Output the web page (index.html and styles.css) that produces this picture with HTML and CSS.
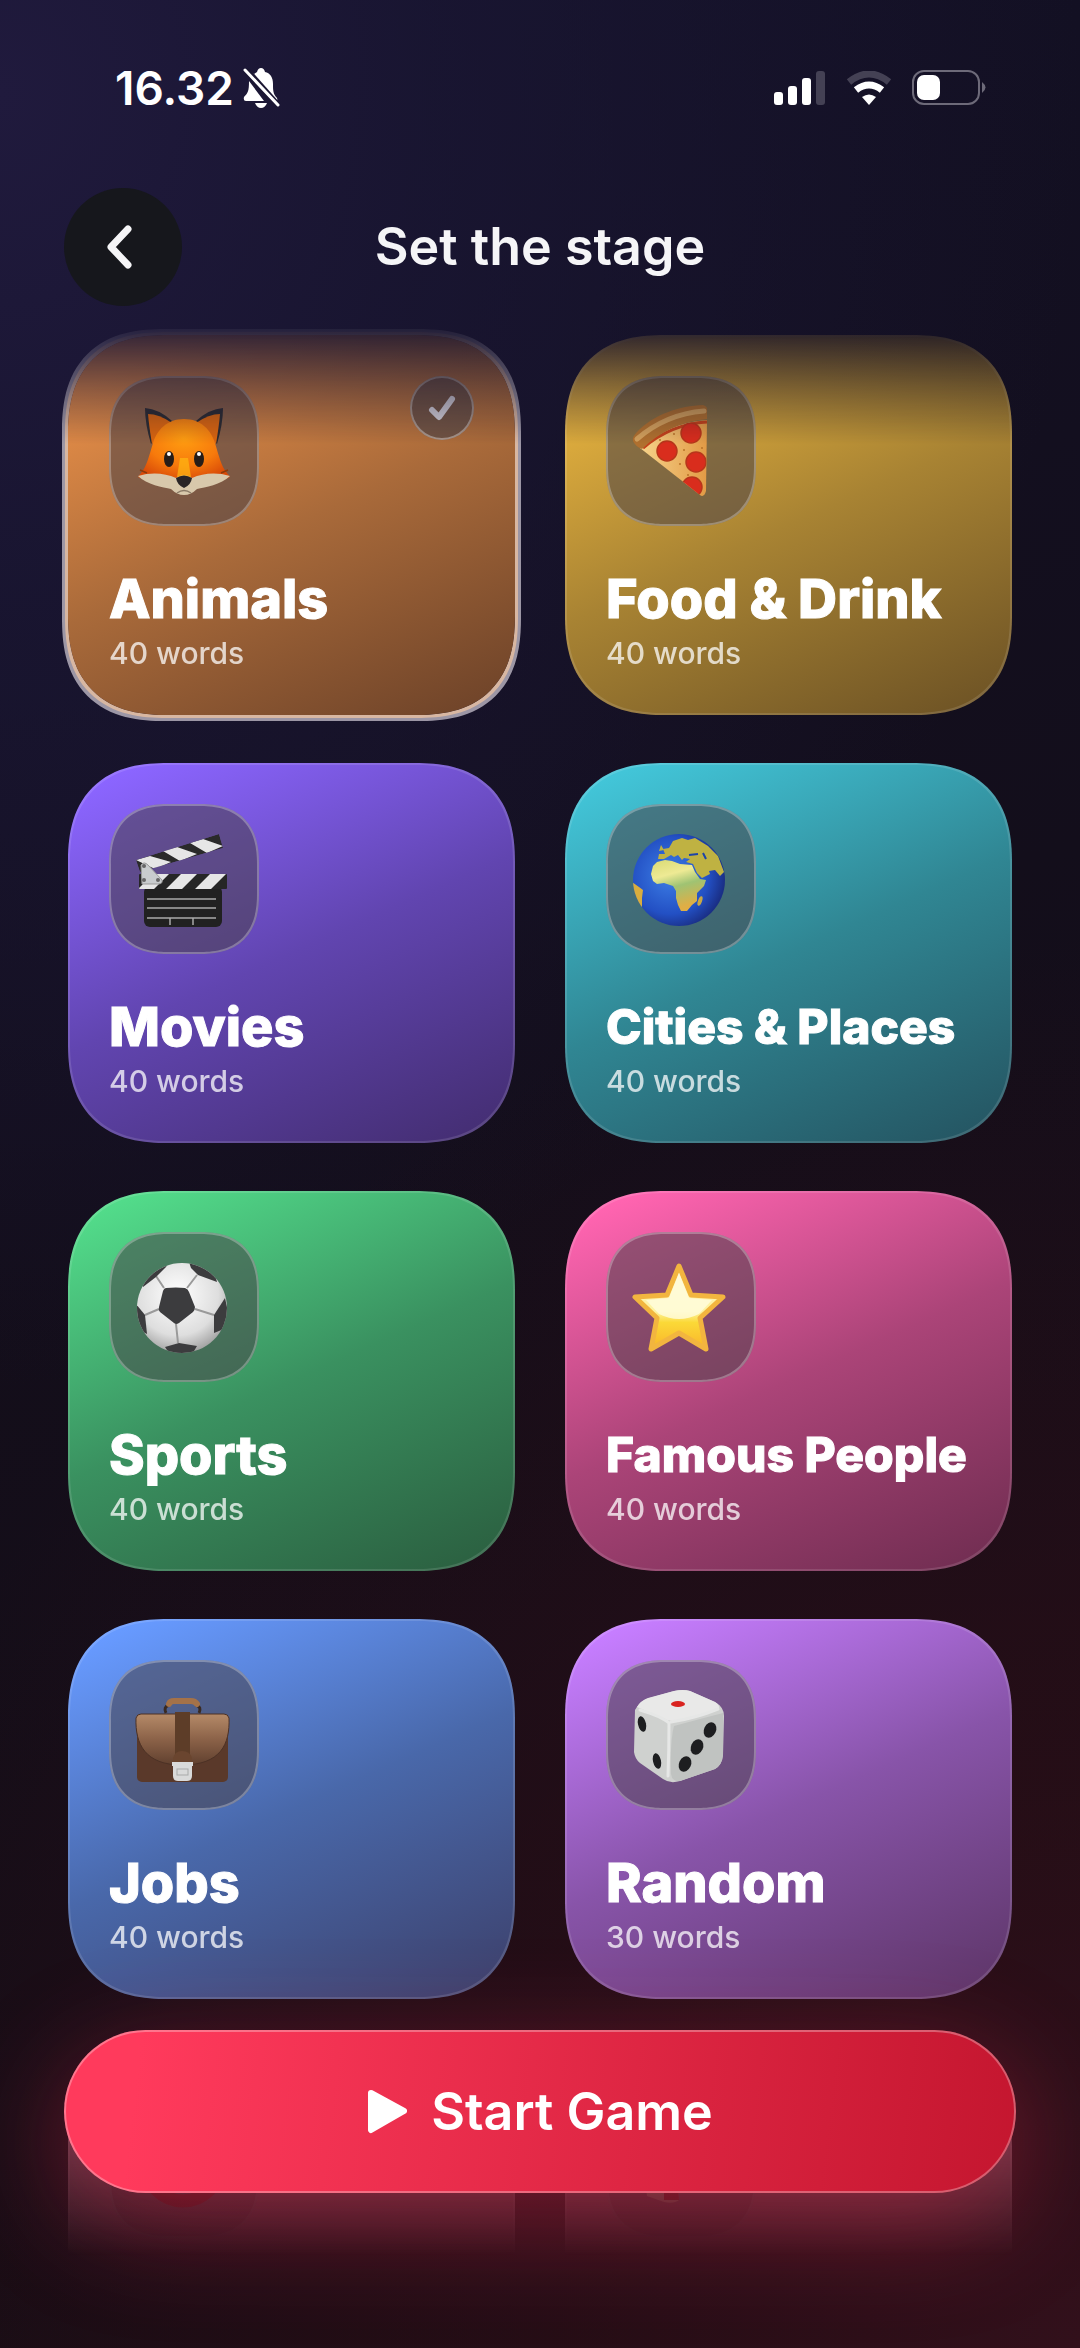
FILE: index.html
```html
<!DOCTYPE html>
<html lang="en">
<head>
    <meta charset="UTF-8">
    <meta name="viewport" content="width=device-width, initial-scale=1.0">
    <title>Set the stage</title>
    <link rel="stylesheet" href="styles.css">
</head>
<body>
    <div class="screen">
        <div class="status-bar">
            <div class="status-left">
                <span class="time">16.32</span>
                <svg class="bell" width="38" height="40" viewBox="0 0 38 40">
                    <path fill="#fff" d="M9 4 L30 34 H34 Q36 33 35 30 C31 26 31 22 31 16 C31 9 28 5 23 4 Q22 0 19 0 Q16 0 15 4 L12 6 Z"/>
                    <path fill="#fff" d="M7 13 C7 23 6 25 2 29 Q1 33 4 33 H22 Z"/>
                    <path fill="#fff" d="M13 35 H25 Q23 40 19 40 Q15 40 13 35 Z"/>
                    <path stroke="#1b1733" stroke-width="7" d="M4 2 L36 38"/>
                    <path stroke="#fff" stroke-width="3" stroke-linecap="round" d="M3 2 L36 37"/>
                </svg>
            </div>
            <div class="status-right">
                <svg width="52" height="34" viewBox="0 0 52 34">
                    <rect x="0" y="21" width="9" height="13" rx="3" fill="#fff"/>
                    <rect x="14" y="15" width="9" height="19" rx="3" fill="#fff"/>
                    <rect x="28" y="7" width="9" height="27" rx="3" fill="#fff"/>
                    <rect x="42" y="0" width="9" height="34" rx="3" fill="#444154"/>
                </svg>
                <svg width="46" height="34" viewBox="0 0 46 34">
                    <path fill="none" stroke="#444154" stroke-width="7" d="M3 11 Q23 -5 43 11"/>
                    <path fill="none" stroke="#fff" stroke-width="7" d="M10 19 Q23 9 36 19"/>
                    <path fill="#fff" d="M16 26 Q23 21 30 26 L23 34 Z"/>
                </svg>
                <svg width="74" height="36" viewBox="0 0 74 36">
                    <rect x="1" y="1" width="66" height="33" rx="11" fill="none" stroke="#6d6a79" stroke-width="2"/>
                    <rect x="5" y="5" width="23" height="25" rx="7" fill="#fff"/>
                    <path fill="#6d6a79" d="M70 12 Q77 17.500 70 23 Z"/>
                </svg>
            </div>
        </div>

        <header class="header">
            <button class="back-btn" type="button" aria-label="Back">
                <svg width="30" height="46" viewBox="0 0 30 46">
                    <path fill="none" stroke="#f5f5f7" stroke-width="7" stroke-linecap="round" stroke-linejoin="round" d="M23 5 L6 23 L23 41"/>
                </svg>
            </button>
            <h1>Set the stage</h1>
        </header>

        <main class="list">
            <button class="card orange selected" type="button" aria-pressed="true">
                <span class="card-top">
                    <span class="tile">
                        <svg viewBox="0 0 150 150">
                            <defs>
                                <radialGradient id="fur" cx="50%" cy="30%" r="65%">
                                    <stop offset="0" stop-color="#ff9d10"/>
                                    <stop offset="0.6" stop-color="#f77a0c"/>
                                    <stop offset="1" stop-color="#d84a08"/>
                                </radialGradient>
                            </defs>
                            <path fill="#2b2b30" d="M36 32 Q50 33 63 45 L42 68 Q36 48 36 32 Z"/>
                            <path fill="#2b2b30" d="M114 32 Q100 33 87 45 L108 68 Q114 48 114 32 Z"/>
                            <path fill="#d9650f" d="M39 38 Q50 38 63 47 L43 68 Q40 50 39 38 Z"/>
                            <path fill="#d9650f" d="M111 38 Q100 38 87 47 L107 68 Q110 50 111 38 Z"/>
                            <path fill="url(#fur)" d="M75 43 C92 43 102 54 106 67 C110 80 112 90 118 97 L121 101 C112 106 98 110 75 110 C52 110 38 106 29 101 L32 97 C38 90 40 80 44 67 C48 54 58 43 75 43 Z"/>
                            <path fill="#d8c8ab" d="M29 100 C42 96 56 97 67 102 Q75 96 83 102 C94 97 108 96 121 100 C112 109 96 111 88 113 Q82 119 75 119 Q68 119 62 113 C54 111 38 109 29 100 Z"/>
                            <path fill="#ffb813" d="M71 82 H79 L82 101 H68 Z" opacity="0.7"/>
                            <path fill="#2a2526" d="M67 102 Q75 97 83 102 Q82 109 75 112 Q68 109 67 102 Z"/>
                            <path fill="none" stroke="#8a7a66" stroke-width="1.500" d="M68 117 Q75 112 82 117"/>
                            <path stroke="#8c3a0a" stroke-width="1.500" d="M31 94 L38 97 M119 94 L112 97"/>
                            <ellipse cx="60" cy="83" rx="5" ry="8" fill="#271d18"/>
                            <ellipse cx="90" cy="83" rx="5" ry="8" fill="#271d18"/>
                            <ellipse cx="60" cy="78" rx="2" ry="2" fill="#fff"/>
                            <ellipse cx="90" cy="78" rx="2" ry="2" fill="#fff"/>
                        </svg>
                    </span>
                    <span class="check">
                        <svg width="28" height="26" viewBox="0 0 28 26">
                            <path fill="none" stroke="#d8d4dc" stroke-width="6" stroke-linecap="round" stroke-linejoin="round" d="M4 15 L11 22 L24 4"/>
                        </svg>
                    </span>
                </span>
                <span class="card-text">
                    <span class="card-title">Animals</span>
                    <span class="card-count">40 words</span>
                </span>
            </button>

            <button class="card yellow" type="button" aria-pressed="false">
                <span class="card-top">
                    <span class="tile">
                        <svg viewBox="0 0 150 150">
                            <defs>
                                <clipPath id="slice"><path d="M34 72 Q64 46 101 44 L100 115 Q98 122 94 119 Z"/></clipPath>
                                <linearGradient id="cheese" x1="0" x2="1">
                                    <stop offset="0" stop-color="#f6d38a"/>
                                    <stop offset="1" stop-color="#e29a45"/>
                                </linearGradient>
                            </defs>
                            <path fill="url(#cheese)" d="M34 72 Q64 46 101 44 L100 115 Q98 122 94 119 Z"/>
                            <path fill="none" stroke="#c4421b" stroke-width="3" d="M37 72 Q65 48 101 46"/>
                            <path fill="#b0702f" d="M27 65 Q26 61 31 56 C48 38 74 30 97 29 Q101 30 101 33 L101 43 Q64 46 36 73 Q29 70 27 65 Z"/>
                            <path fill="none" stroke="#d3a05c" stroke-width="5" stroke-linecap="round" d="M31 63 Q60 38 98 35"/>
                            <g clip-path="url(#slice)" fill="#d92d1d" stroke="#b8361a" stroke-width="1.500">
                                <circle cx="85" cy="57" r="10"/>
                                <circle cx="61" cy="75" r="10"/>
                                <circle cx="90" cy="86" r="10"/>
                                <circle cx="86" cy="111" r="10"/>
                            </g>
                            <g fill="#b97328">
                                <circle cx="54" cy="64" r="1"/><circle cx="74" cy="88" r="1"/>
                                <circle cx="78" cy="74" r="1"/><circle cx="96" cy="72" r="1"/>
                                <circle cx="82" cy="99" r="1"/><circle cx="68" cy="58" r="1"/>
                            </g>
                        </svg>
                    </span>
                </span>
                <span class="card-text">
                    <span class="card-title">Food &amp; Drink</span>
                    <span class="card-count">40 words</span>
                </span>
            </button>

            <button class="card violet" type="button" aria-pressed="false">
                <span class="card-top">
                    <span class="tile">
                        <svg viewBox="0 0 150 150">
                            <defs>
                                <clipPath id="arm-top"><path d="M27 56 L110 30 L114 44 L31 68 Z"/></clipPath>
                                <clipPath id="arm-low"><rect x="30" y="70" width="88" height="15" rx="1"/></clipPath>
                            </defs>
                            <rect x="35" y="82" width="78" height="41" rx="6" fill="#212121"/>
                            <path stroke="#a9a9a9" stroke-width="1.500" d="M38 95 H107 M38 104 H107 M38 114 H107 M61 114 V121 M84 114 V121"/>
                            <g clip-path="url(#arm-low)">
                                <rect x="30" y="70" width="88" height="15" fill="#262626"/>
                                <path fill="#e6e6e6" d="M44 70 L29 85 H45 L60 70 Z M72 70 L57 85 H73 L88 70 Z M101 70 L86 85 H102 L117 70 Z"/>
                            </g>
                            <g clip-path="url(#arm-top)">
                                <path fill="#2a2a2a" d="M27 56 L110 30 L114 44 L31 68 Z"/>
                                <path fill="#e6e6e6" d="M27 56 L41 52 L62 58 L46 65 Z M54 47 L68 43 L88 50 L71 57 Z M81 39 L94 35 L114 42 L98 49 Z"/>
                            </g>
                            <path fill="#c9ccce" stroke="#999" stroke-width="1" d="M32 61 Q35 57 39 61 L53 76 Q54 80 49 80 H33 Z"/>
                            <circle cx="35" cy="62" r="2" fill="#666"/>
                            <circle cx="35" cy="76" r="2" fill="#666"/>
                            <circle cx="49" cy="76" r="2" fill="#666"/>
                        </svg>
                    </span>
                </span>
                <span class="card-text">
                    <span class="card-title">Movies</span>
                    <span class="card-count">40 words</span>
                </span>
            </button>

            <button class="card teal" type="button" aria-pressed="false">
                <span class="card-top">
                    <span class="tile">
                        <svg viewBox="0 0 150 150">
                            <defs>
                                <radialGradient id="sea" cx="40%" cy="45%" r="60%">
                                    <stop offset="0" stop-color="#3d7fe6"/>
                                    <stop offset="0.7" stop-color="#2350c4"/>
                                    <stop offset="1" stop-color="#1a2f86"/>
                                </radialGradient>
                                <linearGradient id="land" x1="0" y1="0" x2="0.300" y2="1">
                                    <stop offset="0" stop-color="#d9da74"/>
                                    <stop offset="0.350" stop-color="#eeea94"/>
                                    <stop offset="0.600" stop-color="#9fc373"/>
                                    <stop offset="1" stop-color="#e0ae45"/>
                                </linearGradient>
                                <clipPath id="globe"><circle cx="73" cy="76" r="46"/></clipPath>
                            </defs>
                            <circle cx="73" cy="76" r="46" fill="url(#sea)"/>
                            <g clip-path="url(#globe)">
                                <path fill="url(#land)" d="M47 62 L51 58 L59 56 L66 57 L74 60 L86 61 L89 68 L94 75 L100 76 L98 82 L91 89 L91 97 L86 101 L81 107 L75 107 L72 101 L70 94 L70 87 L67 82 L58 79 L51 80 L47 77 L45 70 Z"/>
                                <path fill="#bfb242" d="M52 55 L53 50 L59 50 L57 45 L63 44 L67 37 L76 34 L82 36 L89 34 L102 42 L112 52 L118 68 L114 72 L109 66 L103 67 L104 70 L96 74 L91 69 L87 60 L80 58 L84 55 L78 54 L76 56 L72 51 L68 53 L65 51 L58 55 Z"/>
                                <path fill="#bfb242" d="M53 47 L55 41 L58 46 Z"/>
                                <ellipse cx="94" cy="97" rx="2" ry="5" fill="#c9a844" transform="rotate(20 94 97)"/>
                                <path fill="#d8ad3f" d="M26 78 L33 83 L37 86 L36 94 L36 106 L26 100 Z"/>
                                <path stroke="#1e45a8" stroke-width="2" d="M97 49 L100 55 M83 51 L92 50"/>
                            </g>
                        </svg>
                    </span>
                </span>
                <span class="card-text">
                    <span class="card-title small">Cities &amp; Places</span>
                    <span class="card-count">40 words</span>
                </span>
            </button>

            <button class="card green" type="button" aria-pressed="false">
                <span class="card-top">
                    <span class="tile">
                        <svg viewBox="0 0 150 150">
                            <defs>
                                <radialGradient id="leather" cx="45%" cy="35%" r="65%">
                                    <stop offset="0" stop-color="#ffffff"/>
                                    <stop offset="0.700" stop-color="#dedede"/>
                                    <stop offset="1" stop-color="#a5a5a5"/>
                                </radialGradient>
                                <clipPath id="ball"><circle cx="73" cy="76" r="45"/></clipPath>
                            </defs>
                            <circle cx="73" cy="76" r="45" fill="url(#leather)"/>
                            <g clip-path="url(#ball)">
                                <path fill="none" stroke="#9a9a9a" stroke-width="2" d="M55 56 L47 44 M78 56 L88 43 M86 77 L105 83 M67 92 L69 111 M50 77 L36 83"/>
                                <g fill="#3c3c3e">
                                    <path d="M57 56 Q67 55 76 56 Q79 57 80 60 L86 75 Q86 78 84 80 L70 91 Q67 93 65 91 L51 80 Q49 78 50 75 L54 59 Q55 56 57 56 Z"/>
                                    <path d="M60 30 L57 35 L47 45 L34 55 L30 40 Z"/>
                                    <path d="M80 30 L82 36 L89 43 L108 50 L104 34 Z"/>
                                    <path d="M116 66 L105 83 L105 101 L122 94 Z"/>
                                    <path d="M56 115 L70 111 L88 114 L82 124 H62 Z"/>
                                    <path d="M27 72 L36 83 L38 102 L26 96 Z"/>
                                </g>
                            </g>
                        </svg>
                    </span>
                </span>
                <span class="card-text">
                    <span class="card-title">Sports</span>
                    <span class="card-count">40 words</span>
                </span>
            </button>

            <button class="card pink" type="button" aria-pressed="false">
                <span class="card-top">
                    <span class="tile">
                        <svg viewBox="0 0 150 150">
                            <defs>
                                <linearGradient id="gold" x1="0" y1="0" x2="0" y2="1">
                                    <stop offset="0" stop-color="#fff3c0"/>
                                    <stop offset="0.550" stop-color="#fdf3a0"/>
                                    <stop offset="0.680" stop-color="#fbd937"/>
                                    <stop offset="1" stop-color="#f9b42a"/>
                                </linearGradient>
                            </defs>
                            <path fill="url(#gold)" stroke="#f2b53f" stroke-width="5" stroke-linejoin="round" d="M73 34 L85 63 L117 65 L94 86 L100 117 L73 101 L45 117 L51 86 L29 65 L61 63 Z"/>
                            <path fill="#fffde0" opacity="0.800" d="M73 41 L83 66 L106 68 L93 82 Q73 92 53 82 L40 68 L63 66 Z"/>
                        </svg>
                    </span>
                </span>
                <span class="card-text">
                    <span class="card-title small">Famous People</span>
                    <span class="card-count">40 words</span>
                </span>
            </button>

            <button class="card blue" type="button" aria-pressed="false">
                <span class="card-top">
                    <span class="tile">
                        <svg viewBox="0 0 150 150">
                            <defs>
                                <linearGradient id="flap" x1="0" y1="0" x2="0" y2="1">
                                    <stop offset="0" stop-color="#b58a68"/>
                                    <stop offset="0.500" stop-color="#8b6248"/>
                                    <stop offset="1" stop-color="#60402f"/>
                                </linearGradient>
                            </defs>
                            <path fill="none" stroke="#3a2a22" stroke-width="3" d="M57 53 Q54 47 60 45 M90 53 Q93 47 87 45"/>
                            <path fill="none" stroke="#a47249" stroke-width="6" stroke-linecap="round" d="M60 44 Q61 41 65 41 H82 Q86 41 88 44"/>
                            <rect x="28" y="56" width="91" height="66" rx="5" fill="#5a392a"/>
                            <path fill="url(#flap)" stroke="#4c3125" stroke-width="1" d="M27 58 Q28 54 32 54 H115 Q119 54 120 58 C121 84 112 105 73 105 C36 105 26 84 27 58 Z"/>
                            <rect x="66" y="52" width="15" height="42" fill="#5d3d28"/>
                            <path fill="#6a452f" d="M64 102 V98 Q66 91 73 91 Q81 91 83 98 V102 Z"/>
                            <path fill="#d9dada" d="M63 102 H84 V106 H83 V116 Q83 121 78 121 H69 Q64 121 64 116 V106 H63 Z"/>
                            <rect x="68" y="109" width="11" height="6" fill="none" stroke="#a9aaaa" stroke-width="1"/>
                        </svg>
                    </span>
                </span>
                <span class="card-text">
                    <span class="card-title">Jobs</span>
                    <span class="card-count">40 words</span>
                </span>
            </button>

            <button class="card purple" type="button" aria-pressed="false">
                <span class="card-top">
                    <span class="tile">
                        <svg viewBox="0 0 150 150">
                            <path fill="#cfd1cf" d="M29 50 Q33 43 40 39 L68 31 Q77 29 84 31 L109 42 Q118 47 118 56 L117 95 Q116 105 109 109 L74 121 Q64 124 57 119 L34 103 Q29 99 28 92 Z"/>
                            <path fill="#e9e9e8" d="M31 47 Q34 41 42 38 L68 31 Q77 29 84 31 L109 42 Q114 45 113 49 Q100 54 70 61 Q63 62 57 58 Z"/>
                            <path fill="#c0c3c1" d="M68 66 Q90 60 117 53 L117 95 Q116 105 109 109 L74 121 Q66 122 65 114 Q64 80 68 66 Z"/>
                            <path fill="none" stroke="#e6e7e6" stroke-width="3" stroke-linecap="round" d="M34 50 Q57 57 63 63 Q63 90 62 116 M65 62 Q90 58 112 49"/>
                            <ellipse cx="72" cy="44" rx="7" ry="3" fill="#d9231f"/>
                            <g fill="#1d1e20">
                                <ellipse cx="36" cy="64" rx="4" ry="8" transform="rotate(-12 36 64)"/>
                                <ellipse cx="51" cy="101" rx="4" ry="8" transform="rotate(-12 51 101)"/>
                                <ellipse cx="104" cy="70" rx="6" ry="8" transform="rotate(25 104 70)"/>
                                <ellipse cx="91" cy="87" rx="6" ry="8" transform="rotate(25 91 87)"/>
                                <ellipse cx="79" cy="104" rx="6" ry="8" transform="rotate(25 79 104)"/>
                            </g>
                        </svg>
                    </span>
                </span>
                <span class="card-text">
                    <span class="card-title">Random</span>
                    <span class="card-count">30 words</span>
                </span>
            </button>

            <!-- next row, faded out under the start button -->
            <div class="card peek" aria-hidden="true">
                <span class="tile">
                    <svg viewBox="0 0 150 150">
                        <circle cx="74" cy="76" r="37" fill="none" stroke="#c01828" stroke-width="13"/>
                    </svg>
                </span>
            </div>
            <div class="card peek" aria-hidden="true">
                <span class="tile">
                    <svg viewBox="0 0 150 150">
                        <path fill="#c8a090" d="M40 100 L72 92 L73 112 Q68 116 58 114 L41 108 Z"/>
                        <path fill="#b01a24" d="M58 96 L72 92 L73 112 L58 112 Z"/>
                    </svg>
                </span>
            </div>
        </main>

        <div class="footer">
            <button class="start-btn" type="button">
                <svg width="40" height="46" viewBox="0 0 40 46">
                    <path fill="#fff" stroke="#fff" stroke-width="6" stroke-linejoin="round" d="M4 4 L37 22 L4 41 Z"/>
                </svg>
                Start Game
            </button>
        </div>
    </div>
</body>
</html>
```
FILE: styles.css
```css
* {
    box-sizing: border-box;
}
body {
    margin: 0;
    font-family: Inter, Roboto, "Liberation Sans", sans-serif;
    background: #140d17;
    color: white;
}
button {
    font-family: inherit;
    color: inherit;
    border: none;
    cursor: pointer;
}
.screen {
    position: relative;
    display: flex;
    flex-direction: column;
    height: 100vh;
    overflow: hidden;
    background:
        radial-gradient(ellipse 100% 55% at 0% 4%, #201a3d 0%, rgba(27, 23, 54, 0.7) 40%, rgba(20, 17, 36, 0) 100%),
        radial-gradient(ellipse 120% 60% at 100% 100%, #32101b 0%, rgba(44, 14, 23, 0.7) 40%, rgba(28, 12, 17, 0) 100%),
        linear-gradient(160deg, #131127 0%, #130e1b 45%, #180d13 100%);
}

/* status bar */
.status-bar {
    display: flex;
    justify-content: space-between;
    align-items: center;
    height: 176px;
    padding: 0 94px 0 115px;
}
.status-left {
    display: flex;
    align-items: center;
    gap: 8px;
}
.status-right {
    display: flex;
    align-items: center;
    gap: 20px;
}
.time {
    font-size: 46px;
    font-weight: 600;
    line-height: 56px;
}

/* header */
.header {
    display: grid;
    grid-template-columns: 118px 1fr 118px;
    align-items: center;
    padding: 12px 64px 0;
}
.header h1 {
    margin: 0;
    font-size: 52px;
    font-weight: 600;
    line-height: 60px;
    text-align: center;
    color: #f5f5f7;
}
.back-btn {
    display: flex;
    align-items: center;
    justify-content: center;
    width: 118px;
    height: 118px;
    padding: 0 6px 0 0;
    border-radius: 50%;
    background: #16171c;
}

/* category cards */
.list {
    flex: 1;
    min-height: 0;
    display: grid;
    grid-template-columns: 1fr 1fr;
    grid-auto-rows: 380px;
    gap: 48px 50px;
    padding: 29px 68px 0;
    overflow: hidden;
    -webkit-mask-image: linear-gradient(to bottom, transparent 12px, black 138px, black 1690px, transparent 1950px);
    mask-image: linear-gradient(to bottom, transparent 12px, black 138px, black 1690px, transparent 1950px);
}
.card {
    display: flex;
    flex-direction: column;
    justify-content: space-between;
    padding: 41px 41px 44px;
    border-radius: 84px;
    text-align: left;
    box-shadow: inset 0 0 0 2px rgba(255, 255, 255, 0.12);
}
.card-top {
    display: flex;
    justify-content: space-between;
    align-items: flex-start;
}
.tile {
    width: 150px;
    height: 150px;
    border-radius: 50px;
    background: rgba(72, 66, 72, 0.55);
    box-shadow: inset 0 0 0 2px rgba(255, 255, 255, 0.28);
}
.tile svg {
    display: block;
    width: 100%;
    height: 100%;
}
.check {
    display: flex;
    align-items: center;
    justify-content: center;
    width: 64px;
    height: 64px;
    border-radius: 50%;
    background: rgba(72, 66, 72, 0.6);
    box-shadow: inset 0 0 0 2px rgba(255, 255, 255, 0.38);
}
.card-text {
    display: flex;
    flex-direction: column;
    gap: 4px;
}
.card-title {
    font-size: 54px;
    font-weight: 800;
    line-height: 64px;
    white-space: nowrap;
    -webkit-text-stroke: 1px white;
}
.card-title.small {
    font-size: 48px;
}
.card-count {
    font-size: 30px;
    font-weight: 500;
    line-height: 36px;
    color: rgba(255, 255, 255, 0.74);
}

.orange { background: linear-gradient(156deg, #e88f48 10%, #a96a3a 50%, #6b4128 100%); }
.yellow { background: linear-gradient(156deg, #e8b43f 10%, #a88333 50%, #6a5024 100%); }
.violet { background: linear-gradient(156deg, #8b65ff 6%, #6145b0 50%, #422c6e 100%); }
.teal { background: linear-gradient(156deg, #42c5d8 6%, #308693 50%, #24525f 100%); }
.green { background: linear-gradient(156deg, #52db8a 6%, #3a9160 50%, #2a5c3e 100%); }
.pink { background: linear-gradient(156deg, #ff64b0 6%, #ab4478 50%, #6d2c4f 100%); }
.blue { background: linear-gradient(156deg, #679aff 6%, #4968aa 50%, #3c3f69 100%); }
.purple { background: linear-gradient(156deg, #c67dff 6%, #8854a9 50%, #5c3566 100%); }

.selected {
    box-shadow: 0 0 0 3px #d8b7a2, 0 0 0 6px #9c96a5;
}
.peek {
    justify-content: flex-start;
    background: #a86478;
}
.peek .tile {
    background: rgba(72, 50, 60, 0.3);
    box-shadow: inset 0 0 0 2px rgba(255, 255, 255, 0.15);
}

/* start button floats over the list */
.footer {
    position: absolute;
    left: 0;
    right: 0;
    bottom: 155px;
    padding: 0 64px;
}
.start-btn {
    display: flex;
    align-items: center;
    justify-content: center;
    gap: 24px;
    width: 100%;
    height: 163px;
    border-radius: 82px;
    font-size: 52px;
    font-weight: 600;
    line-height: 64px;
    background: linear-gradient(97deg, #ff3a5c 8%, #c4162f 100%);
    box-shadow: inset 0 0 0 2px rgba(255, 255, 255, 0.3), 0 30px 110px rgba(255, 45, 85, 0.38);
}

/* smoother corners where the browser has them */
@supports (corner-shape: squircle) {
    .card {
        border-radius: 100px;
        corner-shape: superellipse(1.3);
    }
    .tile {
        border-radius: 60px;
        corner-shape: superellipse(1.3);
    }
}
```
